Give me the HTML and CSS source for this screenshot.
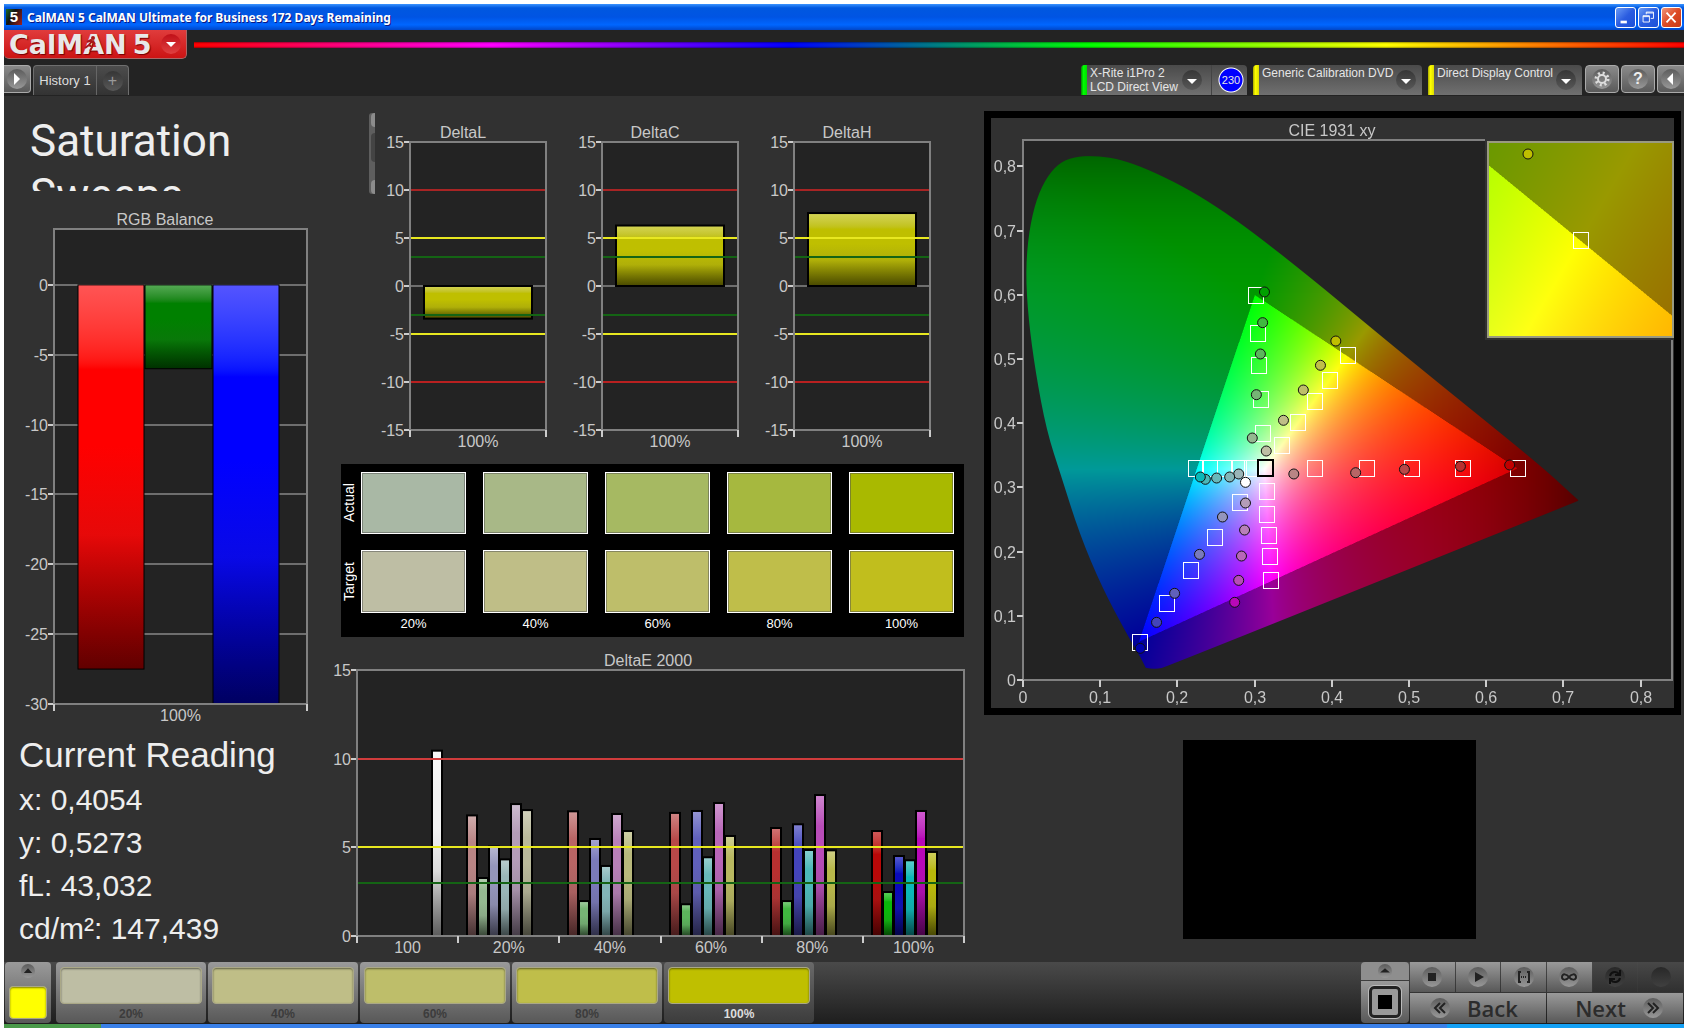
FILE: index.html
```html
<!DOCTYPE html>
<html lang="en">
<head>
  <meta charset="UTF-8">
  <meta name="viewport" content="width=device-width, initial-scale=1.0">
  <title>CalMAN 5</title>
  <link rel="stylesheet" href="styles.css">
</head>
<body>
  <!-- Window title bar -->
  <div class="titlebar">
    <span class="app-icon">5</span>
    <h1>CalMAN 5 CalMAN Ultimate for Business 172 Days Remaining</h1>
    <button class="win-btn" aria-label="Minimize">
      <svg viewBox="0 0 21 21"><path d="M5 14h7v3H5z" fill="#fff"/></svg>
    </button>
    <button class="win-btn" aria-label="Restore">
      <svg viewBox="0 0 21 21" fill="none" stroke="#fff"><path d="M8 7V4.500h8v7h-3M8 5.500h8"/><path d="M4.500 8.500h7v7h-7zM4.500 9.500h7"/></svg>
    </button>
    <button class="win-btn close" aria-label="Close">
      <svg viewBox="0 0 21 21" stroke="#fff" stroke-width="2"><path d="M5 5l10 11M15 5L5 16"/></svg>
    </button>
  </div>

  <!-- Logo and rainbow line -->
  <header>
    <button class="logo" aria-label="CalMAN 5 menu">
      <span>CalMAN</span><span>5</span>
      <svg class="runner" viewBox="0 0 14 16" fill="none" stroke="#a81818" stroke-width="2"><circle cx="9" cy="3" r="1"/><path d="M8 6l-3 4 3 2-2 4M5 10l-4 3M3 7l4-2 4 4"/></svg>
      <i class="knob red"><svg viewBox="0 0 20 20"><path d="M5 8h10l-5 5z" fill="#fff"/></svg></i>
    </button>
    <div class="rainbow"></div>
  </header>

  <!-- Tabs and devices -->
  <nav>
    <button class="square-btn edge-left" aria-label="Open panel"><i class="knob"><svg viewBox="0 0 20 20"><path d="M7 4l6 6-6 6z" fill="#fff"/></svg></i></button>
    <div class="tabs">
      <button class="tab">History 1</button>
      <button class="tab add" aria-label="Add tab"><i class="knob dark">+</i></button>
    </div>
    <div class="devices">
      <button class="device meter">
        <span class="stripe green"></span><span class="name">X-Rite i1Pro 2<br>LCD Direct View</span>
        <i class="knob dark"><svg viewBox="0 0 20 20"><path d="M5 9h10l-5 5z" fill="#fff"/></svg></i>
        <span class="count">230</span>
      </button>
      <button class="device source">
        <span class="stripe"></span><span class="name">Generic Calibration DVD</span>
        <i class="knob dark"><svg viewBox="0 0 20 20"><path d="M5 9h10l-5 5z" fill="#fff"/></svg></i>
      </button>
      <button class="device display">
        <span class="stripe"></span><span class="name">Direct Display Control</span>
        <i class="knob dark"><svg viewBox="0 0 20 20"><path d="M5 9h10l-5 5z" fill="#fff"/></svg></i>
      </button>
    </div>
    <button class="square-btn" aria-label="Settings"><i class="knob"><svg viewBox="0 0 20 20" fill="none" stroke="#ddd"><circle cx="10" cy="10" r="4" stroke-width="2"/><circle cx="10" cy="10" r="6" stroke-width="3" stroke-dasharray="2 2.700"/></svg></i></button>
    <button class="square-btn" aria-label="Help"><i class="knob">?</i></button>
    <button class="square-btn edge-right" aria-label="Close panel"><i class="knob"><svg viewBox="0 0 20 20"><path d="M12 4l-6 6 6 6z" fill="#fff"/></svg></i></button>
  </nav>

  <main>
    <div class="heading">
      <h2>Saturation<br>Sweeps</h2>
      <div class="scrollbar"><span></span><span class="thumb"></span><span></span></div>
    </div>

    <section class="left">
      <svg id="rgbBalance" viewBox="0 0 326 530" role="img" aria-label="RGB Balance"></svg>
      <div class="reading">
        <h3>Current Reading</h3>
        <p>x: 0,4054</p>
        <p>y: 0,5273</p>
        <p>fL: 43,032</p>
        <p>cd/m²: 147,439</p>
      </div>
    </section>

    <section class="deltas">
      <svg id="deltaL" viewBox="0 0 192 336" role="img" aria-label="DeltaL"></svg>
      <svg id="deltaC" viewBox="0 0 192 336" role="img" aria-label="DeltaC"></svg>
      <svg id="deltaH" viewBox="0 0 192 336" role="img" aria-label="DeltaH"></svg>
    </section>

    <section class="middle">
      <div class="swatches">
        <span class="side">Actual</span>
        <div class="sw a20"></div><div class="sw a40"></div><div class="sw a60"></div><div class="sw a80"></div><div class="sw a100"></div>
        <span class="side">Target</span>
        <div class="sw t20"></div><div class="sw t40"></div><div class="sw t60"></div><div class="sw t80"></div><div class="sw t100"></div>
        <span></span>
        <span class="pct">20%</span><span class="pct">40%</span><span class="pct">60%</span><span class="pct">80%</span><span class="pct">100%</span>
      </div>
      <svg id="deltaE" viewBox="0 0 654 320" role="img" aria-label="DeltaE 2000"></svg>
    </section>

    <section class="right">
      <div class="cie">
        <canvas id="gamut" width="1366" height="1180"></canvas>
        <svg id="ciePlot" viewBox="0 0 683 590" role="img" aria-label="CIE 1931 xy"></svg>
      </div>
      <div class="preview"></div>
    </section>
  </main>

  <!-- Bottom controls -->
  <footer>
    <button class="picker" aria-label="Current color">
      <i class="knob small"><svg viewBox="0 0 20 20"><path d="M4 13l6-7 6 7z" fill="#222"/></svg></i>
      <span class="color"></span>
    </button>
    <div class="levels">
      <button class="level"><span class="color t20"></span>20%</button>
      <button class="level"><span class="color t40"></span>40%</button>
      <button class="level"><span class="color t60"></span>60%</button>
      <button class="level"><span class="color t80"></span>80%</button>
      <button class="level active"><span class="color full"></span>100%</button>
    </div>
    <div class="window-btns">
      <button class="up" aria-label="Expand"><i class="knob small"><svg viewBox="0 0 20 20"><path d="M3 12l7-6 7 6z" fill="#222"/></svg></i></button>
      <button class="pattern" aria-label="Pattern window"><span></span></button>
    </div>
    <div class="controls">
      <button aria-label="Stop"><i class="knob"><svg viewBox="0 0 20 20"><path d="M6 6h8v8H6z" fill="#222"/></svg></i></button>
      <button aria-label="Play"><i class="knob"><svg viewBox="0 0 20 20"><path d="M7 5l9 5-9 5z" fill="#222"/></svg></i></button>
      <button aria-label="Read series"><i class="knob"><svg viewBox="0 0 20 20" fill="none" stroke="#222" stroke-width="2"><path d="M7 5H5v10h2M13 5h2v10h-2"/><path d="M7 10h6" stroke-dasharray="1 1"/></svg></i></button>
      <button aria-label="Continuous"><i class="knob"><svg viewBox="0 0 20 20" fill="none" stroke="#222" stroke-width="2"><path d="M10 10c-2-3-7-4-7 0s5 3 7 0 7-4 7 0-5 3-7 0z"/></svg></i></button>
      <button class="off" aria-label="Refresh"><i class="knob"><svg viewBox="0 0 20 20" fill="none" stroke="#101010" stroke-width="2"><path d="M5 9c1-5 7-5 9-2M15 11c-1 5-7 5-9 2M15 3v5h-5M5 17v-5h5"/></svg></i></button>
      <button class="off" aria-label="Record"><i class="knob"></i></button>
      <button class="step back"><i class="knob"><svg viewBox="0 0 20 20" fill="none" stroke="#222" stroke-width="2"><path d="M10 5l-5 5 5 5M15 5l-5 5 5 5"/></svg></i>Back</button>
      <button class="step next">Next<i class="knob"><svg viewBox="0 0 20 20" fill="none" stroke="#222" stroke-width="2"><path d="M5 5l5 5-5 5M10 5l5 5-5 5"/></svg></i></button>
    </div>
  </footer>
  <div class="taskbar"><span class="start"></span><span class="tray"></span></div>

  <script src="charts.js"></script>
</body>
</html>
```
FILE: styles.css
```css
* {
  box-sizing: border-box;
}
body {
  margin: 0;
  padding: 4px 4px 0;
  min-height: 100vh;
  display: flex;
  flex-direction: column;
  background: #fff;
  font-family: "Liberation Sans", Arial, sans-serif;
  color: #e6e6e6;
}
h1, h2, h3, p {
  margin: 0;
  font-weight: normal;
}
button {
  border: none;
  padding: 0;
  margin: 0;
  background: none;
  color: inherit;
  font-family: inherit;
  cursor: pointer;
}
svg {
  display: block;
}

/* Title bar */
.titlebar {
  height: 26px;
  display: flex;
  align-items: center;
  gap: 2px;
  padding: 0 2px;
  background: linear-gradient(#3a93ff 0, #0058e0 15%, #0054e3 50%, #0066ff 80%, #0046c8 100%);
}
.titlebar h1 {
  flex: 1;
  padding-left: 3px;
  font: bold 12px "Noto Sans", sans-serif;
  color: #fff;
  text-shadow: 1px 1px #0a1883;
}
.app-icon {
  width: 16px;
  height: 16px;
  background: linear-gradient(120deg, #1a6b2a, #111 40%, #a02020);
  color: #fff;
  font: bold 15px/16px "Liberation Sans", sans-serif;
  text-align: center;
}
.win-btn {
  width: 21px;
  height: 21px;
  border: 1px solid #fff;
  border-radius: 3px;
  background: linear-gradient(135deg, #6a9bf5, #2a5ce0 50%, #1c50d8);
}
.win-btn.close {
  background: linear-gradient(135deg, #f0957a, #dd4a25 50%, #c83a18);
}

/* Logo row */
header {
  height: 35px;
  display: flex;
  align-items: flex-start;
  gap: 7px;
  background: #232323;
}
.logo {
  position: relative;
  width: 183px;
  height: 29px;
  display: flex;
  align-items: center;
  gap: 6px;
  padding-left: 5px;
  overflow: hidden;
  border: 1px solid #a66;
  border-top: none;
  border-left: none;
  border-radius: 0 0 5px 5px;
  background: linear-gradient(#e03c3c, #cc1414);
  font: bold 27px/27px "DejaVu Sans", sans-serif;
  color: #e8e8e8;
  text-shadow: 1px 1px 1px #700;
}
.logo .knob {
  margin-left: 4px;
}
.runner {
  position: absolute;
  left: 80px;
  top: 5px;
  width: 14px;
  height: 16px;
}
.rainbow {
  flex: 1;
  height: 6px;
  margin-top: 12px;
  background: linear-gradient(rgba(0,0,0,.4), transparent 30%, transparent 70%, rgba(0,0,0,.4)),
    linear-gradient(90deg, #f00, #f0f, #00f, #0f0, #ff0, #f00);
}

.knob {
  flex: none;
  width: 20px;
  height: 20px;
  border-radius: 50%;
  display: inline-block;
  background: linear-gradient(#5c5c5c, #989898);
  font: bold 16px/20px "Liberation Sans", sans-serif;
  text-align: center;
  color: #eee;
}
.knob.red {
  background: linear-gradient(#c01018, #e04040);
}
.knob.dark {
  background: linear-gradient(#363636, #585858);
}
.knob.small {
  width: 14px;
  height: 14px;
}

/* Tabs */
nav {
  height: 31px;
  display: flex;
  align-items: flex-start;
  gap: 2px;
  background: #232323;
}
.square-btn {
  width: 34px;
  height: 28px;
  border: 1px solid #aaa;
  border-radius: 4px;
  background: linear-gradient(#8a8a8a, #5a5a5a);
}
.square-btn .knob {
  display: block;
  margin: 0 auto;
}
.edge-left {
  width: 27px;
  border-left: none;
  border-radius: 0 4px 4px 0;
}
.edge-right {
  width: 27px;
  border-right: none;
  border-radius: 4px 0 0 4px;
}
.tabs {
  display: flex;
  height: 30px;
  border: 1px solid #6e6e6e;
  border-bottom: none;
  border-radius: 4px 4px 0 0;
  background: linear-gradient(#4c4c4c, #333);
}
.tab {
  width: 62px;
  font-size: 13px;
  color: #ddd;
}
.tab.add {
  width: 32px;
  border-left: 1px solid #666;
}
.tab .knob {
  font-weight: normal;
  color: #999;
}
.devices {
  flex: 1;
  display: flex;
  justify-content: flex-end;
  gap: 6px;
  margin-right: 1px;
}
.device {
  height: 30px;
  display: flex;
  align-items: flex-start;
  overflow: hidden;
  border-radius: 4px 4px 0 0;
  background: linear-gradient(#4a4a4a, #707070);
  font-size: 12px;
  line-height: 14px;
  text-align: left;
}
.device .name {
  flex: 1;
  padding-left: 3px;
  padding-top: 1px;
  white-space: nowrap;
}
.device .knob {
  margin-top: 5px;
  margin-right: 6px;
}
.meter {
  width: 166px;
}
.source {
  width: 169px;
}
.display {
  width: 154px;
}
.stripe {
  width: 6px;
  height: 31px;
  background: linear-gradient(90deg, #aa0, #ff0 40%, #dd0);
}
.stripe.green {
  background: linear-gradient(90deg, #080, #0f0 40%, #0d0);
}
.meter .knob {
  margin-right: 9px;
}
.count {
  align-self: stretch;
  width: 36px;
  padding-left: 3px;
  border-left: 1px solid #444;
  font-size: 11px;
  line-height: 30px;
  text-align: center;
  background: radial-gradient(circle at 19px 15px, #00f 11px, #fff 12px, transparent 13px);
}

/* Workspace */
main {
  flex: 1;
  display: grid;
  grid-template-columns: 326fr 48fr 606fr 700fr;
  grid-template-rows: 104px auto 1fr;
  background: #313131;
}
main svg {
  width: 100%;
  height: auto;
}
main svg text {
  font-size: 16px;
  fill: #c8c8c8;
}
.heading {
  grid-column: 1 / 3;
  grid-row: 1;
  height: 95px;
  padding: 17px 3px 0 26px;
  display: flex;
  justify-content: space-between;
}
.heading h2 {
  height: 78px;
  padding-top: 1px;
  overflow: hidden;
  font: 44px/54px Roboto, sans-serif;
  color: #eee;
}
.scrollbar {
  width: 6px;
  height: 81px;
  display: flex;
  flex-direction: column;
  gap: 6px;
  overflow: hidden;
  border-radius: 3px 0 0 3px;
  background: #5e5e5e;
}
.scrollbar span {
  height: 14px;
  margin-left: 2px;
  border-radius: 6px 0 0 6px;
  background: #8c8c8c;
}
.scrollbar .thumb {
  flex: 1;
  margin-bottom: 12px;
  background: #444;
}
.left {
  grid-column: 1;
  grid-row: 2 / 4;
}
.reading {
  padding: 1px 15px;
  font-size: 30px;
  line-height: 43px;
  color: #eee;
}
.reading h3 {
  font-size: 35px;
  line-height: 47px;
}
.deltas {
  grid-column: 3;
  grid-row: 1 / 3;
  display: grid;
  grid-template-columns: repeat(3, 192fr) 30fr;
  padding: 22px 0 10px;
}
.middle {
  grid-column: 2 / 4;
  grid-row: 3;
}
.swatches {
  height: 173px;
  margin: 0 20px 0 11px;
  display: grid;
  grid-template-columns: 3px repeat(5, 1fr);
  grid-template-rows: 62px 63px 20px;
  gap: 16px 17px;
  padding: 8px 10px 0 0;
  background: #000;
  font-size: 14px;
  color: #fff;
}
.pct {
  margin-top: -13px;
  font-size: 13px;
  text-align: center;
}
.side {
  width: 16px;
  writing-mode: vertical-rl;
  transform: rotate(180deg);
  text-align: center;
  line-height: 16px;
}
.sw {
  border: 1px solid #fff;
  box-shadow: inset 0 0 0 1px rgba(80, 80, 80, .5);
}
.a20 { background: #a9b8a5; }
.a40 { background: #a8b887; }
.a60 { background: #a6b962; }
.a80 { background: #a6b83f; }
.a100 { background: #a9b900; }
.t20 { background: #bebea4; }
.t40 { background: #bfbe87; }
.t60 { background: #bebe6a; }
.t80 { background: #bfbe4a; }
.t100 { background: #c1be1d; }
.full { background: #bfbf00; }

.right {
  grid-column: 4;
  grid-row: 1 / 4;
  padding: 15px 3px 0 0;
}
.cie {
  display: grid;
  border: 7px solid #000;
  background: #313131;
}
/* the canvas and the plot share one cell */
.cie canvas, .cie svg {
  grid-area: 1 / 1;
  width: 100%;
  height: auto;
}
.preview {
  width: 42%;
  height: 199px;
  margin: 25px auto 0 199px;
  background: #000;
}

/* Bottom bar */
footer {
  height: 62px;
  display: flex;
  align-items: flex-start;
  gap: 1px;
  padding: 0 1px;
  background: linear-gradient(#4a4a4a, #1e1e1e);
}
footer button {
  background: linear-gradient(#9a9a9a, #585858);
}
.picker {
  width: 46px;
  height: 61px;
  display: flex;
  flex-direction: column;
  align-items: center;
  justify-content: space-between;
  padding: 2px 4px 4px;
  border-radius: 4px;
}
.picker .color {
  width: 38px;
  height: 33px;
  background: #ff0;
}
.color {
  border: 1px solid #aaa887;
  border-radius: 4px;
  box-shadow: inset 0 1px 2px rgba(0, 0, 0, .5);
}
.levels {
  flex: 1;
  display: flex;
  gap: 2px;
  padding-left: 4px;
}
.level {
  width: 150px;
  height: 61px;
  padding: 5px 4px;
  border-radius: 4px;
  font-size: 12px;
  line-height: 20px;
  font-weight: bold;
  color: #3c3c3c;
}
.level .color {
  display: block;
  height: 37px;
}
footer .level.active {
  background: linear-gradient(#6a6a6a, #3c3c3c);
  color: #ddd;
}
.window-btns {
  width: 48px;
  display: flex;
  flex-direction: column;
  gap: 1px;
}
.window-btns .up {
  height: 18px;
  border-radius: 4px 4px 0 0;
  background: #8e8e8e;
}
.up .knob {
  display: block;
  margin: 0 auto;
}
.window-btns .pattern {
  height: 42px;
  padding: 5px 8px;
  border-radius: 0 0 4px 4px;
}
.pattern span {
  display: block;
  width: 32px;
  height: 32px;
  border: 3px solid #222;
  border-radius: 5px;
  outline: 1px solid #bbb;
  background: linear-gradient(#000, #000) center / 14px 14px no-repeat, #999;
}
.controls {
  width: 273px;
  display: grid;
  grid-template-columns: repeat(6, 1fr);
  grid-template-rows: 30px 30px;
  gap: 1px;
}
.controls button {
  display: flex;
  align-items: center;
  justify-content: center;
}
.controls .off {
  background: linear-gradient(#484848, #303030);
}
.controls .off .knob {
  background: linear-gradient(#282828, #404040);
}
.controls .step {
  grid-column: span 3;
  gap: 17px;
  font: 600 22px "Open Sans", sans-serif;
  color: #2c2c2c;
}
.controls .back {
  padding-right: 8px;
}
.controls .next {
  padding-left: 8px;
}
.taskbar {
  height: 4px;
  display: flex;
  justify-content: space-between;
  background: #3a80e8;
}
.start {
  width: 97px;
  background: #4a9a4a;
}
.tray {
  width: 237px;
  background: #14a0f4;
}
```
FILE: charts.js
```js
// Vertical shading shared by all bars
function gradient(id, color) {
  return `<linearGradient id="${id}" x1="0" y1="0" x2="0" y2="1">
    <stop offset="0" stop-color="color-mix(in srgb, ${color} 67%, white)"/>
    <stop offset="0.22" stop-color="${color}"/>
    <stop offset="0.42" stop-color="${color}"/>
    <stop offset="0.65" stop-color="color-mix(in srgb, ${color} 87%, #444)"/>
    <stop offset="1" stop-color="color-mix(in srgb, ${color} 38%, black)"/>
  </linearGradient>`;
}

function text(x, y, value, anchor = 'middle') {
  return `<text x="${x}" y="${y}" text-anchor="${anchor}">${value}</text>`;
}

function hline(x1, x2, y, color, width = 1) {
  return `<path d="M${x1} ${y}H${x2}" stroke="${color}" stroke-width="${width}"/>`;
}

// o: box [left, top, right, bottom], min, max, step, title, bars, limits, categories
function barChart(id, o) {
  const [l, t, r, b] = o.box;
  const py = v => b - (v - o.min) * (b - t) / (o.max - o.min);
  let out = `<rect x="${l}" y="${t}" width="${r - l}" height="${b - t}" fill="#232323"/>`;
  out += text(o.titleX, t - 4, o.title);
  for (let v = o.min; v <= o.max; v += o.step) {
    const y = Math.round(py(v));
    if (o.grid || v === 0) out += hline(l, r, y, '#6e6e6e', 2);
    out += hline(l - 6, l, y, '#ccc', 2) + text(l - 6, y + 6, v, 'end');
  }
  o.bars.forEach((bar, i) => {
    const top = py(Math.max(bar.value, 0));
    const height = Math.abs(py(bar.value) - py(0));
    out += gradient(id + i, bar.color);
    out += `<rect x="${bar.x}" y="${top}" width="${bar.width}" height="${height}" fill="url(#${id + i})" stroke="#000" stroke-width="${o.stroke || 2}"/>`;
  });
  (o.limits || []).forEach(([v, color, width]) => {
    out += hline(l, r, Math.round(py(v)), color, width);
  });
  out += `<rect x="${l}" y="${t}" width="${r - l}" height="${b - t}" fill="none" stroke="#808080" stroke-width="2"/>`;
  const step = (r - l) / o.categories.length;
  o.categories.forEach((name, i) => {
    out += text(l + step * (i + 0.5), b + 17, name);
  });
  for (let i = 0; i <= o.categories.length; i++) {
    out += `<path d="M${Math.round(l + step * i)} ${b}v7" stroke="#ccc" stroke-width="2"/>`;
  }
  document.getElementById(id).innerHTML = out;
}

barChart('rgbBalance', {
  box: [50, 29, 303, 504], min: -30, max: 4, step: 5, grid: true, stroke: 1,
  title: 'RGB Balance', titleX: 161, categories: ['100%'],
  bars: [
    { x: 74, width: 66, value: -27.5, color: '#ff0000' },
    { x: 141, width: 67, value: -6, color: '#008000' },
    { x: 209, width: 66, value: -30, color: '#0000ff' }
  ]
});

const limits = [
  [10, '#a82424', 2], [-10, '#b82020', 2],
  [5, '#e8e820', 2], [-5, '#e8e820', 2],
  [3, '#146414', 2], [-3, '#146414', 2]
];
[['deltaL', 'DeltaL', -3.4], ['deltaC', 'DeltaC', 6.3], ['deltaH', 'DeltaH', 7.6]].forEach(([id, title, value]) => {
  barChart(id, {
    box: [32, 24, 168, 312], min: -15, max: 15, step: 5,
    title: title, titleX: 85, categories: ['100%'], limits: limits,
    bars: [{ x: 46, width: 108, value: value, color: '#bfbf00' }]
  });
});

// DeltaE values: red, green, blue, cyan, magenta, yellow
const sweeps = [
  { values: [6.8, 3.27, 5.05, 4.32, 7.44, 7.1], colors: ['#b98585', '#94b890', '#9495bb', '#9ab5b8', '#b49cb8', '#b9b99a'] },
  { values: [7.03, 1.97, 5.47, 3.95, 6.88, 5.92], colors: ['#b86565', '#76b575', '#7a7abb', '#82b5b8', '#b880b8', '#b8b87c'] },
  { values: [6.94, 1.79, 7.05, 4.44, 7.5, 5.64], colors: ['#b84848', '#5cb55c', '#6060bb', '#68b8ba', '#b866b8', '#b8b860'] },
  { values: [6.09, 1.97, 6.3, 4.85, 7.95, 4.83], colors: ['#b83030', '#40b840', '#4444bb', '#4cb8b8', '#b84cb8', '#b8b84a'] },
  { values: [5.92, 2.48, 4.51, 4.27, 7.05, 4.74], colors: ['#b80808', '#0ab80a', '#0a0abb', '#0ab8b8', '#b808b8', '#b8b80a'] }
];
const eBars = [{ x: 102, width: 10, value: 10.45, color: '#f2f2f2' }];
sweeps.forEach((sweep, g) => {
  sweep.values.forEach((value, i) => {
    eBars.push({ x: Math.round(27 + 101.2 * (g + 1) + 9) + i * 11, width: 10, value: value, color: sweep.colors[i] });
  });
});
barChart('deltaE', {
  box: [27, 33, 634, 299], min: 0, max: 15, step: 5,
  title: 'DeltaE 2000', titleX: 318, bars: eBars,
  categories: ['100', '20%', '40%', '60%', '80%', '100%'],
  limits: [[10, '#d03c3c', 2], [5, '#e8e820', 2], [3, '#146414', 2]]
});

/* ---- CIE 1931 xy ---- */
const X0 = 32, Y0 = 562, KX = 772, KY = 642;
const cx = x => X0 + x * KX;
const cy = y => Y0 - y * KY;
const locus = [
  [.159, .019], [.152, .036], [.1343, .072], [.102, .145], [.073, .228], [.0496, .317], [.0303, .389],
  [.0162, .48], [.0069, .563], [.0034, .636], [.0075, .698], [.0174, .75], [.032, .786], [.0496, .808],
  [.0718, .816], [.0993, .816], [.1257, .811], [.1606, .796], [.2073, .769], [.2484, .739],
  [.2953, .7], [.3742, .625], [.4415, .558], [.5, .5], [.5583, .443], [.6695, .335], [.7176, .282],
  [.7198, .28], [.7176, .278], [.184, .0198], [.1754, .0176], [.166, .0176]
];
const inset = { x: 497, y: 24, w: 185, h: 195, tx: .4193, ty: .5053, px: 589, py: 122, kx: 3757, ky: 3880 };

function inTriangle(x, y) {
  const p = [[.64, .33], [.3, .6], [.15, .06]];
  return p.every(([ax, ay], i) => {
    const [bx, by] = p[(i + 1) % 3];
    return (bx - ax) * (y - ay) - (by - ay) * (x - ax) >= 0;
  });
}

function xyColor(x, y) {
  const X = x / y, Z = (1 - x - y) / y;
  const rgb = [
    3.2406 * X - 1.5372 - 0.4986 * Z,
    -0.9689 * X + 1.8758 + 0.0415 * Z,
    0.0557 * X - 0.2040 + 1.0570 * Z
  ].map(v => Math.max(v, 0));
  const max = Math.max(...rgb);
  let k = inTriangle(x, y) ? 255 : 153;
  if (x > .5) k *= 1 - 9 * (x - .5) ** 2;
  if (y > .58) k *= 1 - 6 * (y - .58) ** 2;
  return rgb.map(v => k * v / max);
}

// Fills an area of the canvas with the colours of its xy range
function paint(ctx, x, y, w, h, toX, toY) {
  const off = document.createElement('canvas');
  off.width = w * 2;
  off.height = h * 2;
  const octx = off.getContext('2d');
  const img = octx.createImageData(off.width, off.height);
  for (let j = 0, n = 0; j < off.height; j++) {
    for (let i = 0; i < off.width; i++, n += 4) {
      const c = xyColor(toX(x + i / 2), Math.max(toY(y + j / 2), .001));
      img.data[n] = c[0];
      img.data[n + 1] = c[1];
      img.data[n + 2] = c[2];
      img.data[n + 3] = 255;
    }
  }
  octx.putImageData(img, 0, 0);
  ctx.drawImage(off, x, y, w, h);
}

const ctx = document.getElementById('gamut').getContext('2d');
ctx.scale(2, 2);
ctx.fillStyle = '#232323';
ctx.fillRect(32, 22, 649, 540);
ctx.save();
ctx.beginPath();
locus.forEach(([x, y], i) => {
  const [nx, ny] = locus[(i + 1) % locus.length];
  ctx.quadraticCurveTo(cx(x), cy(y), (cx(x) + cx(nx)) / 2, (cy(y) + cy(ny)) / 2);
});
ctx.closePath();
ctx.clip();
paint(ctx, 32, 30, 570, 525, px => (px - X0) / KX, py => (Y0 - py) / KY);
ctx.restore();
ctx.fillStyle = '#313131';
ctx.fillRect(494, 19, 189, 203);
paint(ctx, inset.x, inset.y, inset.w, inset.h,
  px => inset.tx + (px - inset.px) / inset.kx, py => inset.ty - (py - inset.py) / inset.ky);

const targets = [
  [.3, .6], [.3028, .541], [.3046, .49], [.3075, .438], [.31, .384],
  [.4198, .5057], [.3964, .4673], [.3771, .4351], [.3555, .4019], [.3344, .366],
  [.2233, .33], [.2414, .33], [.2601, .33], [.2783, .33], [.2952, .33],
  [.3771, .33], [.4444, .33], [.5029, .33], [.569, .33], [.6403, .33],
  [.3151, .2939], [.3151, .258], [.3169, .2264], [.3186, .1931], [.3204, .1552],
  [.2794, .2767], [.2479, .2222], [.2157, .1708], [.1853, .1194], [.1502, .0597]
];
const measured = [
  [.3128, .6044, '#00a000'], [.3104, .5566, '#40b840'], [.3075, .5078, '#5cb55c'], [.3023, .4444, '#76b575'], [.297, .3769, '#94b890'],
  [.3151, .3567, '#bebea4'], [.3374, .4045, '#bfbe87'], [.3631, .4517, '#bebe6a'], [.3853, .4902, '#bfbe4a'], [.4052, .528, '#bfbf00'],
  [.3508, .3209, '#b98585'], [.4309, .3229, '#b86565'], [.4941, .3281, '#b84848'], [.5666, .3328, '#b83030'], [.6304, .3349, '#c00000'],
  [.2794, .3209, '#9ab5b8'], [.2677, .3162, '#82b5b8'], [.2508, .3146, '#68b8ba'], [.2362, .3126, '#4cb8b8'], [.2297, .3162, '#0ab8b8'],
  [.2882, .2757, '#b49cb8'], [.287, .2336, '#b880b8'], [.283, .1931, '#b866b8'], [.2794, .1552, '#b84cb8'], [.2742, .121, '#b808b8'],
  [.2584, .2539, '#9495bb'], [.2286, .1957, '#7a7abb'], [.1964, .135, '#6060bb'], [.173, .0898, '#4444bb'], [.1519, .0493, '#0000b0'],
  [.2882, .3079, '#ffffff']
];
const square = (x, y, color, width = 1) => `<rect x="${Math.round(x) - 7}" y="${Math.round(y) - 8}" width="15" height="16" fill="none" stroke="${color}" stroke-width="${width}" shape-rendering="crispEdges"/>`;
const dot = (x, y, color) => `<circle cx="${x}" cy="${y}" r="5" fill="${color}" stroke="#111"/>`;

let plot = text(341, 18, 'CIE 1931 xy');
plot += '<path d="M494 22H32V562H681V222" fill="none" stroke="#808080" stroke-width="2"/>';
for (let i = 0; i <= 8; i++) {
  const label = i === 0 ? '0' : '0,' + i;
  const x = Math.round(cx(i / 10)), y = Math.round(cy(i / 10));
  plot += hline(26, 32, y, '#ccc', 2) + text(25, y + 6, label, 'end');
  plot += `<path d="M${x} 562v7" stroke="#ccc" stroke-width="2"/>` + text(x, 585, label);
}
targets.forEach(([x, y]) => { plot += square(cx(x), cy(y), '#fff'); });
plot += square(cx(.3134), cy(.33), '#000', 2);
measured.forEach(([x, y, color]) => { plot += dot(cx(x), cy(y), color); });
plot += `<rect x="${inset.x}" y="${inset.y}" width="${inset.w}" height="${inset.h}" fill="none" stroke="#9a9a80" stroke-width="2"/>`;
plot += square(inset.px, inset.py, '#fff') + dot(537, 36, '#bfbf00');
document.getElementById('ciePlot').innerHTML = plot;
```
